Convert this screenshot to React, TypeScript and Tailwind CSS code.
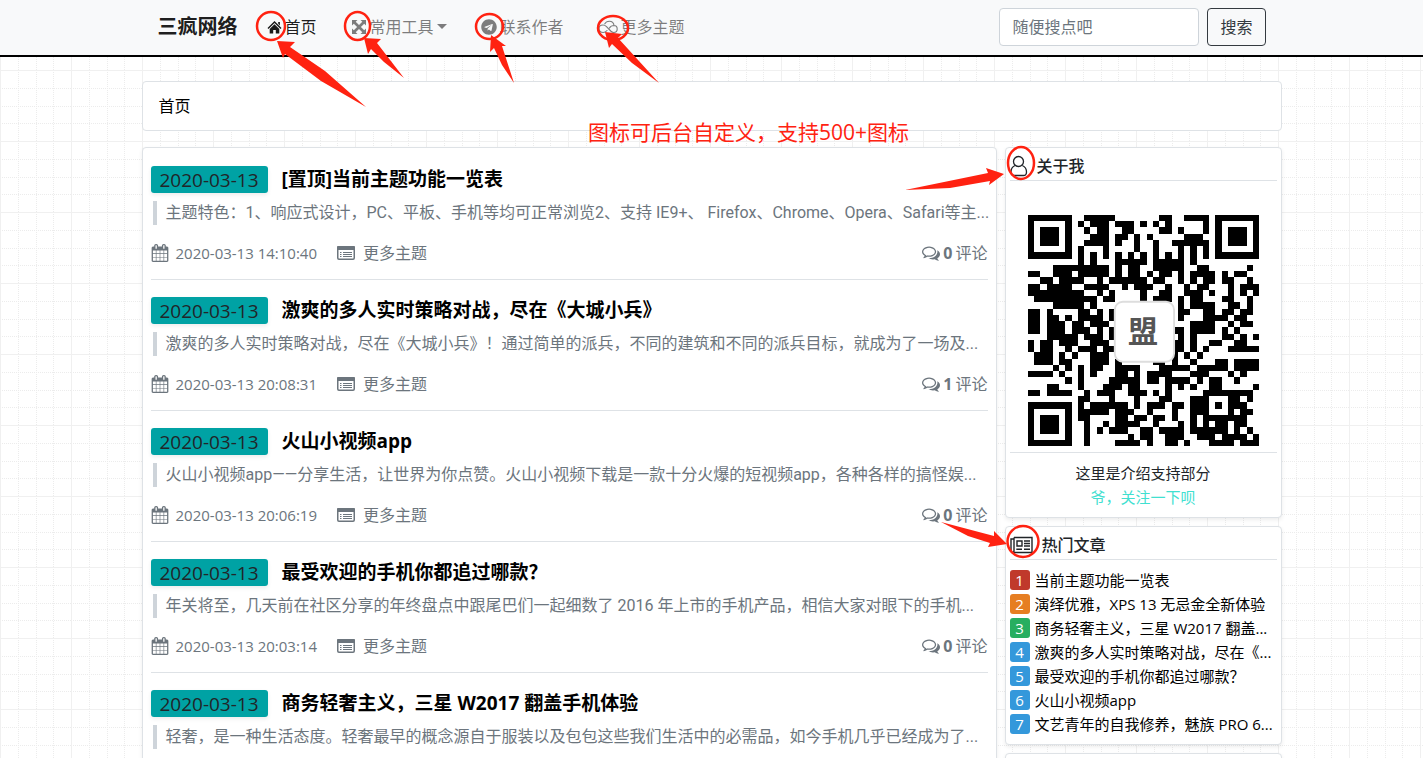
import type { ReactNode } from 'react';
import { FaTelegram } from 'react-icons/fa';

const posts = [
    {
        title: '[置顶]当前主题功能一览表',
        excerpt: '主题特色：1、响应式设计，PC、平板、手机等均可正常浏览2、支持 IE9+、 Firefox、Chrome、Opera、Safari等主...',
        time: '2020-03-13 14:10:40',
        comments: 0,
    },
    {
        title: '激爽的多人实时策略对战，尽在《大城小兵》',
        excerpt: '激爽的多人实时策略对战，尽在《大城小兵》！通过简单的派兵，不同的建筑和不同的派兵目标，就成为了一场及...',
        time: '2020-03-13 20:08:31',
        comments: 1,
    },
    {
        title: '火山小视频app',
        excerpt: '火山小视频app——分享生活，让世界为你点赞。火山小视频下载是一款十分火爆的短视频app，各种各样的搞怪娱...',
        time: '2020-03-13 20:06:19',
        comments: 0,
    },
    {
        title: '最受欢迎的手机你都追过哪款？',
        excerpt: '年关将至，几天前在社区分享的年终盘点中跟尾巴们一起细数了 2016 年上市的手机产品，相信大家对眼下的手机...',
        time: '2020-03-13 20:03:14',
        comments: 0,
    },
    {
        title: '商务轻奢主义，三星 W2017 翻盖手机体验',
        excerpt: '轻奢，是一种生活态度。轻奢最早的概念源自于服装以及包包这些我们生活中的必需品，如今手机几乎已经成为了...',
        time: '2020-03-13 20:01:52',
        comments: 0,
    },
];

const hotPosts = [
    { title: '当前主题功能一览表', color: 'bg-[#c0392b]' },
    { title: '演绎优雅，XPS 13 无忌金全新体验', color: 'bg-[#e67e22]' },
    { title: '商务轻奢主义，三星 W2017 翻盖...', color: 'bg-[#27ae60]' },
    { title: '激爽的多人实时策略对战，尽在《...', color: 'bg-[#3498db]' },
    { title: '最受欢迎的手机你都追过哪款？', color: 'bg-[#3498db]' },
    { title: '火山小视频app', color: 'bg-[#3498db]' },
    { title: '文艺青年的自我修养，魅族 PRO 6...', color: 'bg-[#3498db]' },
];

const qrRows = [
    '#######..#####.......##..####.#######',
    '#.....#.#.###.###.#.#.#.....#.#.....#',
    '#.###.#..#.##..##....##.#...#.#.###.#',
    '#.###.#...###.##.#.#.....###..#.###.#',
    '#.###.#..####.#..#..#..######.#.###.#',
    '#.....#.#...#....#..#...#.#.#.#.....#',
    '#######.#.#.#.#.#.#.#.#.#.#.#.#######',
    '........#.#...#####.#####.#..........',
    '....#########.#.##..#####..##......#.',
    '##..###.#####.#.##.#.##.#.####.#.##..',
    '..##.####..#.######.##..#.#.##.##..#.',
    '##.####..####..#.###..#..#.##...#.###',
    '#########..#.#....#..##..###.#..#.#.#',
    '.##########.##....#.###.#.##...##..#.',
    '....#####.#.............#.####..##.#.',
    '##.#....##.#.#..........##..##.##.##.',
    '##.##.#.####.#..........#...####.##..',
    '##.###.##.###.............####..#.##.',
    '##.###.###.#.#.........##.####.#.#...',
    '...#####.###.#..........#.#....##.#.#',
    '#.##.###..###..........##.#..##..##..',
    '#.##..#.###.##.........##.#.#...#####',
    '.###.#.#..###..........#.#.#.........',
    '.###.##...###.#.....##.#..#...##.####',
    '....#.#.#.##..####...#####.#####.####',
    '####.#..#.#...##.#.####...###...#.#..',
    '......#.#....#####.##.####.#.##..#...',
    '...##...#...###.##....#.#.#..##.....#',
    '##.####..#.###..###.#.#.....########.',
    '........##...#...#...##...###...##.#.',
    '#######.#.######.#.###.##.###.#.###..',
    '#.....#.#####.###..#...#..###...#.##.',
    '#.###.#.##....##.##.##.#..#.#######..',
    '#.###.#..#..#.####..#...#.#.#.##.##..',
    '#.###.#..#.#.###..##.####.######.#.#.',
    '#.....#..#......#.##..###..###.####.#',
    '#######..#....####.#..##.#...####.###',
];

function GridBackground() {
    return (
        <svg className="absolute inset-0 -z-10 h-full w-full" aria-hidden="true">
            <defs>
                <pattern id="grid" width="71" height="71" y="-1" patternUnits="userSpaceOnUse" shapeRendering="crispEdges">
                    <g stroke="#ececec" strokeDasharray="1 1">
                        <path d="M18.5 0V71M36.5 0V71M53.5 0V71M0 18.5H71M0 36.5H71M0 53.5H71" />
                    </g>
                    <path d="M.5 0V71M0 .5H71" stroke="#f0f0f0" />
                </pattern>
            </defs>
            <rect width="100%" height="100%" fill="url(#grid)" />
        </svg>
    );
}

function HomeIcon() {
    return (
        <svg className="h-4 w-4" viewBox="0 0 16 16" fill="currentColor" aria-hidden="true">
            <path d="M8.500 2 15.500 9l-1 1-6-5.900-6 5.900-1-1zM12.200 3h1.700v3.500l-1.700-1.700z" />
            <path d="M8.500 5.200 13.300 10v4.500H9.800v-3.500H7.200v3.500H3.700V10z" />
        </svg>
    );
}

function ArrowsIcon() {
    return (
        <svg className="h-4 w-4" viewBox="0 0 16 16" fill="currentColor" aria-hidden="true">
            <path d="M1 1h5.500L4.700 2.800 8 6.100l3.300-3.300L9.500 1H15v5.500l-1.800-1.800L9.900 8l3.300 3.300L15 9.500V15H9.500l1.800-1.800L8 9.900l-3.300 3.300L6.500 15H1V9.500l1.800 1.800L6.100 8 2.800 4.700 1 6.500z" />
        </svg>
    );
}

function CloudIcon() {
    return (
        <svg className="h-4 w-5" viewBox="0 0 20 16" fill="none" stroke="currentColor" strokeWidth="1.100" strokeLinecap="round" aria-hidden="true">
            <path d="M9 11.500C8 12.700 6.800 13.500 5.200 13.500 2.700 13.500 1 11.800 1 9.700S2.700 6 5 6c1.500 0 2.500.6 3.500 1.600l4.200 4.400c.9.9 1.800 1.500 3 1.500 1.900 0 3.500-1.500 3.500-3.500S17.800 6.600 16 6.500C15.800 4 13.800 2.200 11.300 2.200 9.300 2.200 7.600 3.200 6.800 4.800M11.500 9c.8-1.500 2.300-2.500 4.500-2.500" />
        </svg>
    );
}

function CalendarIcon() {
    return (
        <svg className="h-[18px] w-[18px]" viewBox="0 0 1792 1792" fill="currentColor" aria-hidden="true">
            <path d="M192 1664h288v-288h-288v288zm352 0h320v-288h-320v288zm-352-352h288v-320h-288v320zm352 0h320v-320h-320v320zm-352-384h288v-288h-288v288zm736 736h320v-288h-320v288zm-384-736h320v-288h-320v288zm768 736h288v-288h-288v288zm-384-352h320v-320h-320v320zm-352-864v-288q0-13-9.500-22.500t-22.500-9.500h-64q-13 0-22.500 9.500t-9.500 22.500v288q0 13 9.500 22.500t22.500 9.500h64q13 0 22.500-9.500t9.500-22.500zm736 864h288v-320h-288v320zm-384-384h320v-288h-320v288zm384 0h288v-288h-288v288zm32-480v-288q0-13-9.500-22.500t-22.500-9.500h-64q-13 0-22.500 9.500t-9.500 22.500v288q0 13 9.500 22.500t22.500 9.500h64q13 0 22.500-9.500t9.500-22.500zm384-64v1280q0 52-38 90t-90 38h-1408q-52 0-90-38t-38-90v-1280q0-52 38-90t90-38h128v-96q0-66 47-113t113-47h64q66 0 113 47t47 113v96h384v-96q0-66 47-113t113-47h64q66 0 113 47t47 113v96h128q52 0 90 38t38 90z" />
        </svg>
    );
}

function ListIcon() {
    return (
        <svg className="h-[18px] w-[18px]" viewBox="0 0 18 18" aria-hidden="true">
            <rect x="0.750" y="2.750" width="16.500" height="12.500" rx="1.200" fill="none" stroke="currentColor" strokeWidth="1.500" />
            <path d="M0 6V3q0-1 1-1h16q1 0 1 1v3z" fill="currentColor" />
            <path d="M3 8.500h1.500M3 10.500h1.500M3 12.500h1.500M6 8.500h9M6 10.500h9M6 12.500h9" stroke="currentColor" strokeWidth="1" />
        </svg>
    );
}

function CommentsIcon() {
    return (
        <svg className="h-[18px] w-[18px]" viewBox="0 0 1792 1792" fill="currentColor" aria-hidden="true">
            <path d="M704 384q-153 0-286 52t-211.500 141-78.500 191q0 82 53 158t149 132l97 56-35 84q34-20 62-39l44-31 53 10q78 14 153 14 153 0 286-52t211.500-141 78.500-191-78.500-191-211.500-141-286-52zm0-128q191 0 353.500 68.500t256.500 186.500 94 257-94 257-256.500 186.500-353.500 68.500q-86 0-176-16-124 88-278 128-36 9-86 16h-3q-11 0-20.500-8t-11.500-21q-1-3-1-6.500t.5-6.500 2-6l2.500-5 3.500-5.500 4-5 4.500-5 4-4.500q5-6 23-25t26-29.500 22.500-29 25-38.500 20.500-44q-124-72-195-177t-71-224q0-139 94-257t256.500-186.500 353.500-68.500zm822 1169q10 24 20.500 44t25 38.500 22.500 29 26 29.500 23 25q1 1 4 4.500t4.500 5 4 5 3.500 5.500l2.500 5 2 6 .5 6.500-1 6.500q-3 14-13 22t-22 7q-50-7-86-16-154-40-278-128-90 16-176 16-271 0-472-132 58 4 88 4 161 0 309-45t264-129q125-92 192-212t67-254q0-77-23-152 129 71 204 178t75 230q0 120-71 224.500t-195 176.500z" />
        </svg>
    );
}

function UserIcon() {
    return (
        <svg className="h-[22px] w-[18px]" viewBox="0 0 18 22" fill="none" stroke="currentColor" strokeWidth="1.300" aria-hidden="true">
            <circle cx="8.500" cy="6.500" r="5" />
            <path d="M5 10.500C2.500 11.700 1 14 1 17c0 2.500 1 3.500 3 3.500h9.500c2 0 3-1 3-3.500 0-3-1.500-5.300-4.200-6.500" />
        </svg>
    );
}

function NewspaperIcon() {
    return (
        <svg className="h-[18px] w-[23px]" viewBox="0 0 23 18" fill="none" stroke="currentColor" strokeWidth="1.400" aria-hidden="true">
            <path d="M4 1.500h18v15H3c-1.300 0-2-.7-2-2V3h3M4 1.500v13c0 1.300-.5 2-1.500 2" />
            <path d="M7 5h5v5H7zM14 5h6M14 7.500h6M14 10h6M6.300 13.300H12M14 13.300h6" />
        </svg>
    );
}

function QrCode() {
    return (
        <svg className="h-[231px] w-[231px]" viewBox="0 0 37 37" role="img" aria-label="二维码">
            <g shapeRendering="crispEdges">
                {qrRows.map((row, y) =>
                    [...row].map((cell, x) => cell === '#' && <rect key={`${x}-${y}`} x={x} y={y} width="1" height="1" />)
                )}
            </g>
            <rect x="13.900" y="13.900" width="9.500" height="9.600" rx="1.300" fill="#fff" stroke="#ddd" strokeWidth="0.300" />
            <text x="18.400" y="20.400" fontSize="4.800" fontWeight="700" textAnchor="middle" fill="#555">
                盟
            </text>
        </svg>
    );
}

function NavLink({ icon, active, children }: { icon: ReactNode; active?: boolean; children: ReactNode }) {
    return (
        <a href="#" className={`flex items-center gap-[3px] ${active ? 'text-black/90' : 'text-black/50'}`}>
            {icon}
            {children}
        </a>
    );
}

function Panel({ icon, title, children }: { icon: ReactNode; title: string; children: ReactNode }) {
    return (
        <section className="rounded border border-[#dee2e6] bg-white px-1 shadow-[0_2px_4px_rgba(0,0,0,0.075)]">
            <h2 className="flex h-[33px] items-center gap-[9px] border-b border-[#dee2e6] pt-1 font-medium">
                {icon}
                {title}
            </h2>
            {children}
        </section>
    );
}

// Red circles and arrows pointing at the customisable icons
function Annotations() {
    return (
        <div className="pointer-events-none absolute inset-0 text-[#ff2211]">
            <svg className="absolute inset-0 h-full w-full" aria-hidden="true">
                <g fill="none" stroke="currentColor" strokeWidth="2.500">
                    <ellipse cx="271" cy="26" rx="14" ry="14" />
                    <ellipse cx="357.500" cy="26" rx="12.500" ry="14" />
                    <ellipse cx="489.500" cy="26.500" rx="13.500" ry="12.500" />
                    <ellipse cx="613" cy="28" rx="15" ry="12" />
                    <ellipse cx="1021" cy="163" rx="13" ry="16" />
                    <ellipse cx="1023" cy="541.500" rx="15.500" ry="15.500" />
                </g>
                <g fill="currentColor">
                    <path d="M277 41 295 42 290 47 325 71 366 107 321 81 285 54 283 58z" />
                    <path d="M364 38 381 39 377 43 404 78 384 62 371 49 368 54z" />
                    <path d="M491 35 506 46 502 46 514 83 502 65 494 48 490 52z" />
                    <path d="M605 32 622 34 618 38 659 83 632 63 612 44 609 48z" />
                    <path d="M1004 174 986 168 988 173 905 190 950 188 990 181 989 185z" />
                    <path d="M1007 544 994 531 994 536 941 522 968 536 990 543 988 547z" />
                </g>
            </svg>
            <p className="absolute top-[118px] left-[588px] text-[21px] leading-7 font-normal whitespace-nowrap">图标可后台自定义，支持500+图标</p>
        </div>
    );
}

export default function App() {
    return (
        <div className="relative isolate h-screen overflow-hidden bg-white font-['Open_Sans','Noto_Sans_CJK_SC',sans-serif] text-base text-[#212529]">
            <GridBackground />

            <header className="border-b-2 border-black bg-[#f8f9fa]">
                <nav className="mx-auto flex h-[55px] max-w-[1140px] items-center px-4 pb-0.5">
                    <a href="#" className="mr-7 text-xl font-bold text-black/90">三疯网络</a>
                    <div className="flex items-center gap-[34px]">
                        <NavLink active icon={<HomeIcon />}>
                            首页
                        </NavLink>
                        <NavLink icon={<ArrowsIcon />}>
                            常用工具
                            <span className="border-x-[5px] border-t-[5px] border-x-transparent" />
                        </NavLink>
                        <NavLink icon={<FaTelegram className="h-4 w-4" />}>联系作者</NavLink>
                        <NavLink icon={<CloudIcon />}>更多主题</NavLink>
                    </div>
                    <form className="ml-auto flex gap-2" onSubmit={(e) => e.preventDefault()}>
                        <input
                            type="search"
                            aria-label="搜索"
                            placeholder="随便搜点吧"
                            className="h-[38px] w-[200px] rounded border border-[#ced4da] bg-white px-3 placeholder:text-[#6c757d]"
                        />
                        <button type="submit" className="h-[38px] rounded border border-[#343a40] px-3 text-[#343a40]">
                            搜索
                        </button>
                    </form>
                </nav>
            </header>

            <main className="mx-auto max-w-[1140px] pt-6">
                <div className="rounded border border-[#dee2e6] bg-white px-4 py-3 text-black">
                    <a href="#">首页</a>
                </div>

                <div className="mt-4 flex items-start gap-2">
                    <div className="min-w-0 flex-1 rounded border border-[#dee2e6] bg-white px-2 pt-px shadow-[0_2px_4px_rgba(0,0,0,0.075)]">
                        {posts.map((post) => (
                            <article key={post.title} className="border-b border-[#dee2e6] pt-[17px] pb-3.5">
                                <div className="flex h-[27px] items-center gap-3.5">
                                    <span className="flex h-[27px] w-[117px] items-center justify-center rounded-[3px] bg-[#00a2a4] pt-0.5 text-[19px] font-medium shadow-[0_2px_4px_rgba(0,0,0,0.075)]">
                                        2020-03-13
                                    </span>
                                    <h2 className="text-[19px] font-bold text-black">
                                        <a href="#">{post.title}</a>
                                    </h2>
                                </div>
                                <p className="mt-2 ml-0.5 h-6 border-l-4 border-[#ced4da] pl-[9px] font-[Roboto,'Noto_Sans_CJK_SC',sans-serif] leading-6 whitespace-nowrap text-[#6c757d]">
                                    {post.excerpt}
                                </p>
                                <div className="mt-4 flex h-6 items-center text-[#6c757d]">
                                    <CalendarIcon />
                                    <time className="ml-[7px] text-[15px]">{post.time}</time>
                                    <a href="#" className="ml-5 flex items-center gap-2">
                                        <ListIcon />
                                        更多主题
                                    </a>
                                    <span className="ml-auto flex items-center gap-[3px]">
                                        <CommentsIcon />
                                        <b>{post.comments}</b>
                                        <span>评论</span>
                                    </span>
                                </div>
                            </article>
                        ))}
                    </div>

                    <aside className="flex w-[277px] shrink-0 flex-col gap-2">
                        <Panel icon={<UserIcon />} title="关于我">
                            <div className="flex justify-center border-b border-[#dee2e6] pt-[34px] pb-1.5">
                                <QrCode />
                            </div>
                            <div className="pt-2 pb-2 text-center text-[15px] leading-6">
                                <p>这里是介绍支持部分</p>
                                <a href="#" className="text-[#40e0d0]">爷，关注一下呗</a>
                            </div>
                        </Panel>
                        <Panel icon={<NewspaperIcon />} title="热门文章">
                            <ol className="py-2 text-[15px] leading-6 text-black">
                                {hotPosts.map((post, i) => (
                                    <li key={post.title} className="flex items-center gap-[5px] whitespace-nowrap">
                                        <span className={`flex h-5 w-5 shrink-0 items-center justify-center rounded-[3px] text-white ${post.color}`}>
                                            {i + 1}
                                        </span>
                                        <a href="#">{post.title}</a>
                                    </li>
                                ))}
                            </ol>
                        </Panel>
                        <Panel icon={<NewspaperIcon />} title="最新评论">
                            <p className="py-2 text-[15px]">暂无评论</p>
                        </Panel>
                    </aside>
                </div>
            </main>

            <Annotations />
        </div>
    );
}
